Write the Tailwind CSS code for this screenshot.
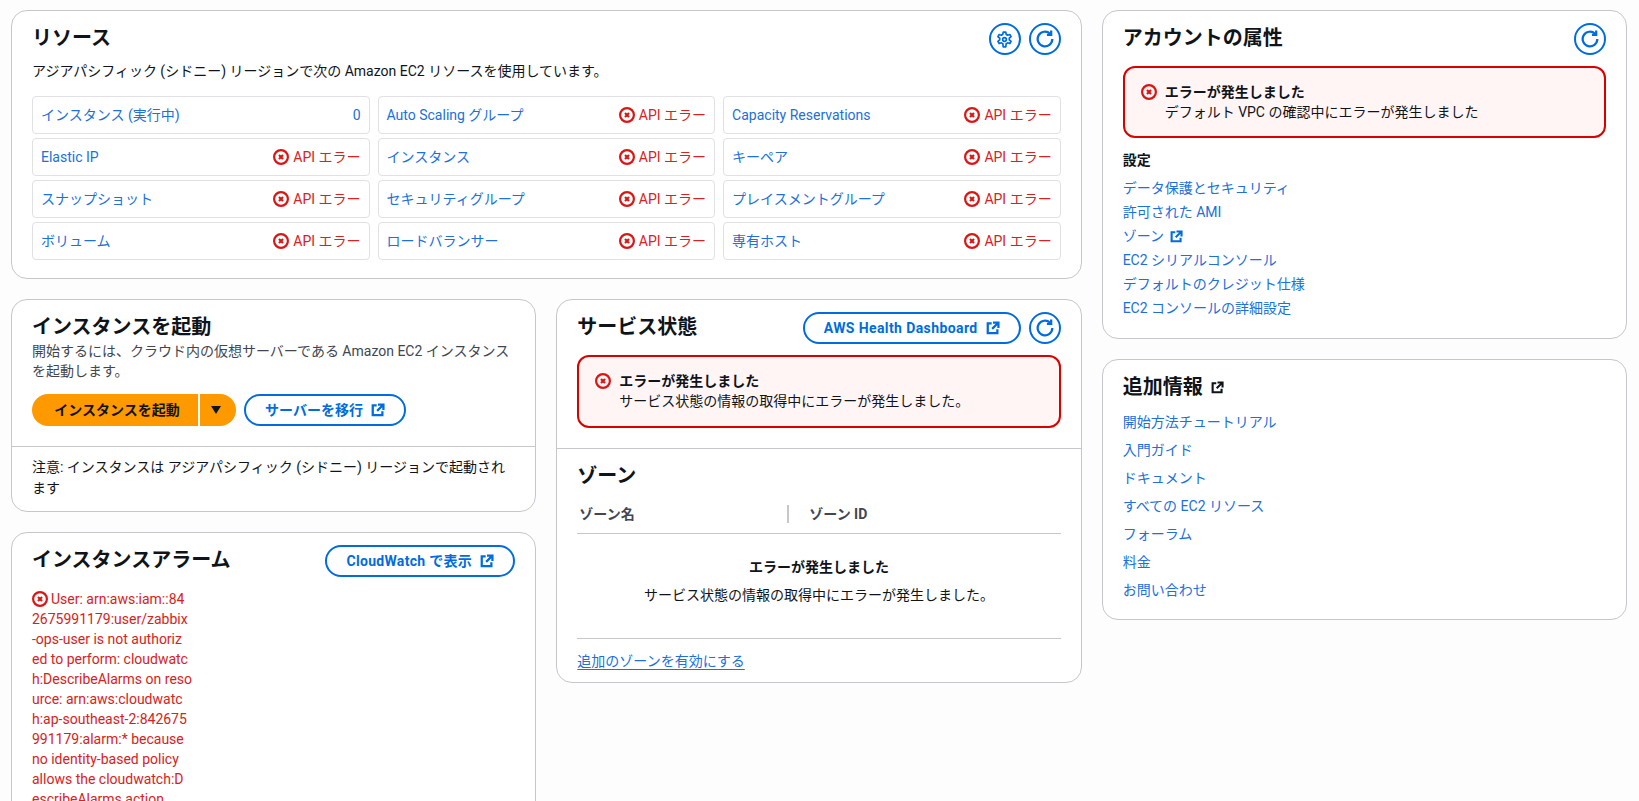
<!DOCTYPE html>
<html lang="ja">
<head>
    <meta charset="UTF-8">
    <meta name="viewport" content="width=device-width, initial-scale=1.0">
    <title>EC2 Dashboard</title>
    <script src="https://cdn.jsdelivr.net/npm/@tailwindcss/browser@4"></script>
</head>
<body class="h-screen overflow-hidden bg-[#fdfdfd] text-[#0f141a] text-sm leading-5 font-['Roboto','Noto_Sans_CJK_JP',sans-serif]">
    <!-- shared icons -->
    <svg class="hidden">
        <symbol id="err" viewBox="0 0 16 16"><circle cx="8" cy="8" r="6.9" fill="none" stroke="#d91515" stroke-width="2.2"/><path d="M6 6l4 4M10 6l-4 4" fill="none" stroke="#d91515" stroke-width="2.2"/></symbol>
        <symbol id="refresh" viewBox="0 0 16 16"><path d="M14.5 8a6.5 6.5 0 1 1-2-4.7" fill="none" stroke="currentColor" stroke-width="2"/><path d="M13.5 .5v3.8H9.7" fill="none" stroke="currentColor" stroke-width="2"/></symbol>
        <symbol id="ext" viewBox="0 0 16 16"><path d="M6.5 2.8H2v11h11V9.5" fill="none" stroke="currentColor" stroke-width="2.6"/><path d="M14.2 8V1.8H8M14 2L7 9" fill="none" stroke="currentColor" stroke-width="2.6"/></symbol>
        <symbol id="gear" viewBox="0 0 16 16"><circle cx="8" cy="8" r="1.7" fill="none" stroke="currentColor" stroke-width="1.6"/><path d="m6.8 1-.4 2.2a5 5 0 0 0-1.3.8l-2.1-.7-1.2 2 1.7 1.5a5 5 0 0 0 0 1.5L1.8 9.8l1.2 2 2.1-.7a5 5 0 0 0 1.3.8L6.8 15h2.4l.4-3.1a5 5 0 0 0 1.3-.8l2.1.7 1.2-2-1.7-1.5a5 5 0 0 0 0-1.5l1.7-1.5-1.2-2-2.1.7a5 5 0 0 0-1.3-.8L9.2 1z" fill="none" stroke="currentColor" stroke-width="1.6" stroke-linejoin="round"/></symbol>
    </svg>

    <div class="grid grid-cols-3 gap-x-5 items-start pl-[11px] pr-3 pt-2.5">
        <!-- left two columns -->
        <div class="col-span-2 flex flex-col gap-5">
            <!-- Resources -->
            <section class="bg-white border border-[#c6c6cd] rounded-2xl px-5 pt-3 h-[269px]">
                <div class="flex justify-between">
                    <h2 class="text-xl font-bold leading-[30px]">リソース</h2>
                    <div class="flex gap-2">
                        <button class="w-8 h-8 rounded-full border-2 border-[#006ce0] text-[#006ce0] flex items-center justify-center"><svg class="w-[17px] h-[17px]"><use href="#gear"/></svg></button>
                        <button class="w-8 h-8 rounded-full border-2 border-[#006ce0] text-[#006ce0] flex items-center justify-center"><svg class="w-[18px] h-[18px]"><use href="#refresh"/></svg></button>
                    </div>
                </div>
                <p class="mt-[6px]">アジアパシフィック (シドニー) リージョンで次の Amazon EC2 リソースを使用しています。</p>
                <div class="grid grid-cols-3 gap-x-2 gap-y-1 mt-[15px]">
                    <div class="h-[38px] border border-[#e0e1e5] rounded flex items-center justify-between px-2 text-[#2070dc]"><a>インスタンス (実行中)</a><span>0</span></div>
                    <div class="h-[38px] border border-[#e0e1e5] rounded flex items-center justify-between px-2 text-[#2070dc]"><a>Auto Scaling グループ</a><span class="flex items-center gap-1 text-[#d92121]"><svg class="w-4 h-4"><use href="#err"/></svg>API エラー</span></div>
                    <div class="h-[38px] border border-[#e0e1e5] rounded flex items-center justify-between px-2 text-[#2070dc]"><a>Capacity Reservations</a><span class="flex items-center gap-1 text-[#d92121]"><svg class="w-4 h-4"><use href="#err"/></svg>API エラー</span></div>
                    <div class="h-[38px] border border-[#e0e1e5] rounded flex items-center justify-between px-2 text-[#2070dc]"><a>Elastic IP</a><span class="flex items-center gap-1 text-[#d92121]"><svg class="w-4 h-4"><use href="#err"/></svg>API エラー</span></div>
                    <div class="h-[38px] border border-[#e0e1e5] rounded flex items-center justify-between px-2 text-[#2070dc]"><a>インスタンス</a><span class="flex items-center gap-1 text-[#d92121]"><svg class="w-4 h-4"><use href="#err"/></svg>API エラー</span></div>
                    <div class="h-[38px] border border-[#e0e1e5] rounded flex items-center justify-between px-2 text-[#2070dc]"><a>キーペア</a><span class="flex items-center gap-1 text-[#d92121]"><svg class="w-4 h-4"><use href="#err"/></svg>API エラー</span></div>
                    <div class="h-[38px] border border-[#e0e1e5] rounded flex items-center justify-between px-2 text-[#2070dc]"><a>スナップショット</a><span class="flex items-center gap-1 text-[#d92121]"><svg class="w-4 h-4"><use href="#err"/></svg>API エラー</span></div>
                    <div class="h-[38px] border border-[#e0e1e5] rounded flex items-center justify-between px-2 text-[#2070dc]"><a>セキュリティグループ</a><span class="flex items-center gap-1 text-[#d92121]"><svg class="w-4 h-4"><use href="#err"/></svg>API エラー</span></div>
                    <div class="h-[38px] border border-[#e0e1e5] rounded flex items-center justify-between px-2 text-[#2070dc]"><a>プレイスメントグループ</a><span class="flex items-center gap-1 text-[#d92121]"><svg class="w-4 h-4"><use href="#err"/></svg>API エラー</span></div>
                    <div class="h-[38px] border border-[#e0e1e5] rounded flex items-center justify-between px-2 text-[#2070dc]"><a>ボリューム</a><span class="flex items-center gap-1 text-[#d92121]"><svg class="w-4 h-4"><use href="#err"/></svg>API エラー</span></div>
                    <div class="h-[38px] border border-[#e0e1e5] rounded flex items-center justify-between px-2 text-[#2070dc]"><a>ロードバランサー</a><span class="flex items-center gap-1 text-[#d92121]"><svg class="w-4 h-4"><use href="#err"/></svg>API エラー</span></div>
                    <div class="h-[38px] border border-[#e0e1e5] rounded flex items-center justify-between px-2 text-[#2070dc]"><a>専有ホスト</a><span class="flex items-center gap-1 text-[#d92121]"><svg class="w-4 h-4"><use href="#err"/></svg>API エラー</span></div>
                </div>
            </section>

            <div class="grid grid-cols-2 gap-x-5 items-start">
                <div class="flex flex-col gap-5">
                    <!-- Launch instance -->
                    <section class="bg-white border border-[#c6c6cd] rounded-2xl">
                        <div class="px-5 pt-3 pb-5 border-b border-[#c6c6cd]">
                            <h2 class="text-xl font-bold leading-[30px]">インスタンスを起動</h2>
                            <p class="-mt-px text-[#424650]">開始するには、クラウド内の仮想サーバーである Amazon EC2 インスタンスを起動します。</p>
                            <div class="flex items-center gap-2 mt-[13px]">
                                <div class="flex gap-[2px] h-8">
                                    <button class="w-[166px] pl-1 rounded-l-full bg-[#ff9900] font-bold">インスタンスを起動</button>
                                    <button class="w-9 rounded-r-full bg-[#ff9900] flex items-center justify-center pr-1"><svg class="w-3 h-3" viewBox="0 0 12 12"><path d="M1 2h10L6 10z" fill="#0f141a"/></svg></button>
                                </div>
                                <button class="h-8 w-[162px] rounded-full border-2 border-[#006ce0] text-[#006ce0] font-bold flex items-center justify-center gap-2">サーバーを移行<svg class="w-[14px] h-[14px]"><use href="#ext"/></svg></button>
                            </div>
                        </div>
                        <p class="px-5 pt-[10px] pb-3 leading-[21px]">注意: インスタンスは アジアパシフィック (シドニー) リージョンで起動されます</p>
                    </section>

                    <!-- Instance alarms -->
                    <section class="bg-white border border-[#c6c6cd] rounded-2xl px-5 pt-3 pb-5">
                        <div class="flex justify-between">
                            <h2 class="text-xl font-bold leading-[30px]">インスタンスアラーム</h2>
                            <button class="h-8 w-[190px] rounded-full border-2 border-[#006ce0] text-[#006ce0] font-bold tracking-[0.3px] flex items-center justify-center gap-2">CloudWatch で表示<svg class="w-[14px] h-[14px]"><use href="#ext"/></svg></button>
                        </div>
                        <p class="mt-3 text-[#d92121] whitespace-nowrap"><svg class="w-4 h-4 inline align-[-3px] mr-[3px]"><use href="#err"/></svg>User: arn:aws:iam::84<br>2675991179:user/zabbix<br>-ops-user is not authoriz<br>ed to perform: cloudwatc<br>h:DescribeAlarms on reso<br>urce: arn:aws:cloudwatc<br>h:ap-southeast-2:842675<br>991179:alarm:* because<br>no identity-based policy<br>allows the cloudwatch:D<br>escribeAlarms action</p>
                    </section>
                </div>

                <!-- Service health -->
                <section class="bg-white border border-[#c6c6cd] rounded-2xl">
                    <div class="px-5 pt-3 pb-5 border-b border-[#c6c6cd]">
                        <div class="flex justify-between">
                            <h2 class="text-xl font-bold leading-[30px]">サービス状態</h2>
                            <div class="flex gap-2">
                                <button class="h-8 w-[218px] rounded-full border-2 border-[#006ce0] text-[#006ce0] font-bold tracking-[0.4px] flex items-center justify-center gap-2">AWS Health Dashboard<svg class="w-[14px] h-[14px]"><use href="#ext"/></svg></button>
                                <button class="w-8 h-8 rounded-full border-2 border-[#006ce0] text-[#006ce0] flex items-center justify-center"><svg class="w-[18px] h-[18px]"><use href="#refresh"/></svg></button>
                            </div>
                        </div>
                        <div class="mt-[11px] h-[73px] border-2 border-[#db0000] rounded-xl bg-[#fff5f5] flex gap-2 px-4 pt-[14px]">
                            <svg class="w-4 h-4 mt-[2px] shrink-0"><use href="#err"/></svg>
                            <div><p class="font-bold">エラーが発生しました</p><p>サービス状態の情報の取得中にエラーが発生しました。</p></div>
                        </div>
                    </div>
                    <div class="px-5 pt-[12px] pb-[11px]">
                        <h2 class="text-xl font-bold leading-[30px]">ゾーン</h2>
                        <div class="flex items-center h-[43px] pt-1 border-b border-[#c6c6cd] text-[#424650] font-bold">
                            <span class="w-[210px] pl-[2px]">ゾーン名</span>
                            <span class="border-l-2 border-[#c6c6cd] pl-5 h-[18px] leading-[18px]">ゾーン ID</span>
                        </div>
                        <div class="text-center border-b border-[#c6c6cd] pt-[23px] h-[105px]">
                            <p class="font-bold">エラーが発生しました</p>
                            <p class="mt-2">サービス状態の情報の取得中にエラーが発生しました。</p>
                        </div>
                        <a class="inline-block mt-3 text-[#2070dc] underline underline-offset-3">追加のゾーンを有効にする</a>
                    </div>
                </section>
            </div>
        </div>

        <!-- right column -->
        <div class="flex flex-col gap-5">
            <section class="bg-white border border-[#c6c6cd] rounded-2xl px-5 pt-3 h-[329px]">
                <div class="flex justify-between">
                    <h2 class="text-xl font-bold leading-[30px]">アカウントの属性</h2>
                    <button class="w-8 h-8 rounded-full border-2 border-[#006ce0] text-[#006ce0] flex items-center justify-center"><svg class="w-[18px] h-[18px]"><use href="#refresh"/></svg></button>
                </div>
                <div class="mt-[11px] h-[72px] border-2 border-[#db0000] rounded-xl bg-[#fff5f5] flex gap-2 px-4 pt-[14px]">
                    <svg class="w-4 h-4 mt-[2px] shrink-0"><use href="#err"/></svg>
                    <div><p class="font-bold">エラーが発生しました</p><p>デフォルト VPC の確認中にエラーが発生しました</p></div>
                </div>
                <h3 class="font-bold mt-3">設定</h3>
                <ul class="mt-2 text-[#2070dc] flex flex-col gap-1">
                    <li>データ保護とセキュリティ</li>
                    <li>許可された AMI</li>
                    <li class="flex items-center gap-[6px]">ゾーン<svg class="w-[13px] h-[13px] text-[#006ce0]"><use href="#ext"/></svg></li>
                    <li>EC2 シリアルコンソール</li>
                    <li>デフォルトのクレジット仕様</li>
                    <li>EC2 コンソールの詳細設定</li>
                </ul>
            </section>
            <section class="bg-white border border-[#c6c6cd] rounded-2xl px-5 pt-3 h-[261px]">
                <h2 class="text-xl font-bold leading-[30px] flex items-center gap-2">追加情報<svg class="w-[13px] h-[13px]"><use href="#ext"/></svg></h2>
                <ul class="mt-[10px] text-[#2070dc] flex flex-col gap-2">
                    <li>開始方法チュートリアル</li>
                    <li>入門ガイド</li>
                    <li>ドキュメント</li>
                    <li>すべての EC2 リソース</li>
                    <li>フォーラム</li>
                    <li>料金</li>
                    <li>お問い合わせ</li>
                </ul>
            </section>
        </div>
    </div>
</body>
</html>
